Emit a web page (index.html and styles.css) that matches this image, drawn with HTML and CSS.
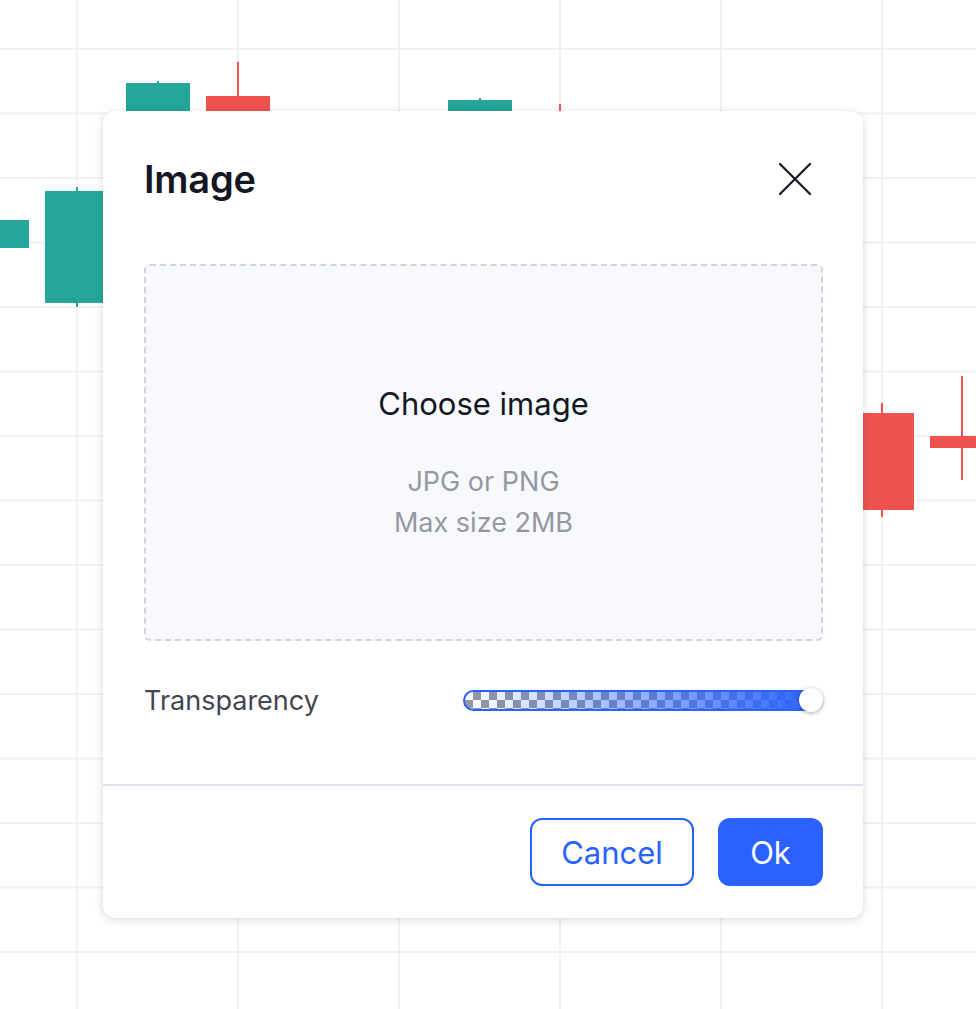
FILE: index.html
```html
<!DOCTYPE html>
<html lang="en">
<head>
<meta charset="utf-8">
<title>Image</title>
<link rel="stylesheet" href="styles.css">
</head>
<body>
<div class="chart">
  <div class="candle up" style="left:-35px;top:220px;height:28px"></div>
  <div class="wick up" style="left:76px;top:187px;height:120px"></div>
  <div class="candle up" style="left:45px;top:191px;height:112px"></div>
  <div class="wick up" style="left:157px;top:81px;height:60px"></div>
  <div class="candle up" style="left:126px;top:83px;height:60px"></div>
  <div class="wick down" style="left:237px;top:62px;height:80px"></div>
  <div class="candle down" style="left:206px;top:96px;height:60px"></div>
  <div class="wick up" style="left:479px;top:98px;height:60px"></div>
  <div class="candle up" style="left:448px;top:100px;height:60px"></div>
  <div class="wick down" style="left:559px;top:104px;height:60px"></div>
  <div class="wick down" style="left:881px;top:403px;height:114px"></div>
  <div class="candle down" style="left:850px;top:413px;height:97px"></div>
  <div class="wick down" style="left:961px;top:376px;height:104px"></div>
  <div class="candle down" style="left:930px;top:436px;height:12px"></div>
</div>

<div class="dialog">
  <div class="dialog-header">
    <h1 class="dialog-title">Image</h1>
    <button class="close-btn" aria-label="Close">
      <svg width="32" height="32" viewBox="0 0 32 32"><path d="M1 1L31 31M31 1L1 31" stroke="#131722" stroke-width="2.2" stroke-linecap="round" fill="none"/></svg>
    </button>
  </div>
  <div class="dialog-body">
    <div class="dropzone">
      <div class="dz-title">Choose image</div>
      <div class="dz-hint">JPG or PNG<br>Max size 2MB</div>
    </div>
    <div class="row">
      <div class="row-label">Transparency</div>
      <div class="slider">
        <div class="slider-track"></div>
        <div class="slider-thumb"></div>
      </div>
    </div>
  </div>
  <div class="dialog-footer">
    <button class="btn btn-secondary">Cancel</button>
    <button class="btn btn-primary">Ok</button>
  </div>
</div>
</body>
</html>
```

FILE: styles.css
```css
html, body {
  margin: 0;
  padding: 0;
  width: 976px;
  height: 1009px;
  overflow: hidden;
  background: #ffffff;
  font-family: Inter, "Noto Sans", Roboto, sans-serif;
}

.chart {
  position: absolute;
  inset: 0;
  background-image:
    linear-gradient(to right, #f0f1f3 2px, transparent 2px),
    linear-gradient(to bottom, #f0f1f3 2px, transparent 2px);
  background-size: 161px 100%, 100% 64.5px;
  background-position: 76px 0, 0 48px;
}

.candle {
  position: absolute;
  width: 64px;
}
.wick {
  position: absolute;
  width: 2px;
}
.up { background: #26a69a; }
.down { background: #ef5350; }

.dialog {
  position: absolute;
  left: 103px;
  top: 111px;
  width: 760px;
  height: 807px;
  box-sizing: border-box;
  background: #ffffff;
  border-radius: 12px;
  box-shadow: 0 2px 10px rgba(0, 0, 0, 0.14), 0 0 2px rgba(0, 0, 0, 0.06);
  display: flex;
  flex-direction: column;
}

.dialog-header {
  display: flex;
  align-items: center;
  justify-content: space-between;
  height: 64px;
  padding: 36px 52px 0 41px;
}

.dialog-title {
  margin: 0;
  font-size: 38px;
  font-weight: 600;
  color: #131722;
  letter-spacing: -0.2px;
}

.close-btn {
  border: 0;
  background: none;
  padding: 0;
  width: 32px;
  height: 32px;
  display: flex;
}

.dialog-body {
  padding: 53px 40px 0 41px;
  flex: 1;
}

.dropzone {
  height: 377px;
  box-sizing: border-box;
  border: 2px dashed #d1d4dc;
  border-radius: 6px;
  background: #f8f9fd;
  text-align: center;
  padding-top: 118px;
}

.dz-title {
  font-size: 31px;
  line-height: 40px;
  color: #131722;
}

.dz-hint {
  margin-top: 37px;
  font-size: 27px;
  line-height: 41px;
  color: #9598a1;
}

.row {
  margin-top: 39px;
  height: 40px;
  display: flex;
  align-items: center;
  justify-content: space-between;
}

.row-label {
  font-size: 27px;
  color: #434651;
}

.slider {
  position: relative;
  width: 360px;
  height: 21px;
}

.slider-track {
  height: 21px;
  box-sizing: border-box;
  border: 2px solid #2962ff;
  border-radius: 11px;
  background-image:
    linear-gradient(to right, rgba(41, 98, 255, 0) 0%, rgba(41, 98, 255, 1) 100%),
    conic-gradient(#9598a1 25%, #ffffff 0 50%, #9598a1 0 75%, #ffffff 0);
  background-size: 100% 100%, 16px 16px;
  background-position: 0 0, 0 0;
}

.slider-thumb {
  position: absolute;
  right: 0;
  top: -1.5px;
  width: 24px;
  height: 24px;
  border-radius: 50%;
  background: #ffffff;
  box-shadow: 0 1px 4px rgba(0, 0, 0, 0.35);
}

.dialog-footer {
  border-top: 2px solid #e0e3eb;
  display: flex;
  justify-content: flex-end;
  gap: 24px;
  padding: 32px 40px 32px 41px;
}

.btn {
  height: 68px;
  box-sizing: border-box;
  border-radius: 12px;
  font-family: Inter, "Noto Sans", Roboto, sans-serif;
  font-size: 31px;
  padding: 0;
  cursor: pointer;
}

.btn-secondary {
  width: 164px;
  background: #ffffff;
  border: 2px solid #2962ff;
  color: #2962ff;
}

.btn-primary {
  width: 105px;
  background: #2962ff;
  border: 0;
  color: #ffffff;
}
```
